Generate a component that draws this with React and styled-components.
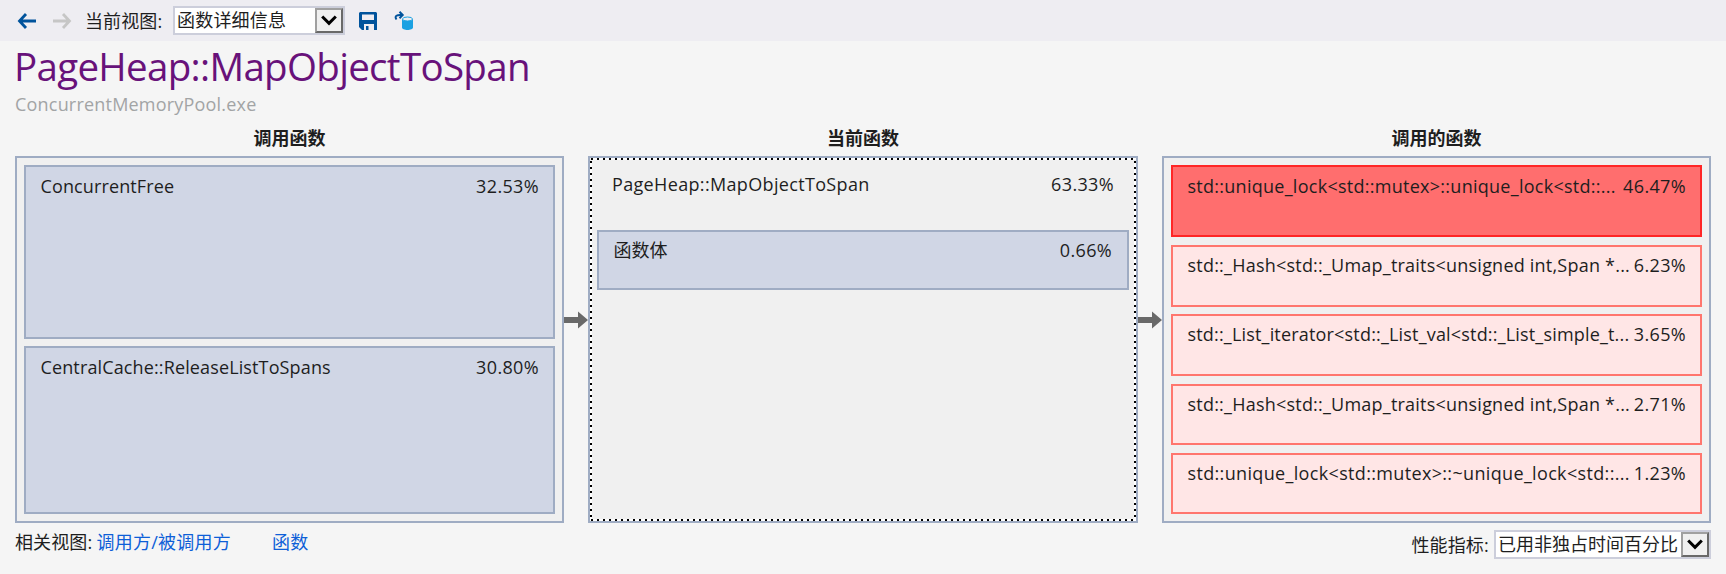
import React from "react";
import styled, { createGlobalStyle, css } from "styled-components";

const Global = createGlobalStyle`
  * { box-sizing: border-box; }
  body { margin: 0; background: #f5f5f5; }
`;

const Page = styled.div`
  width: 1726px;
  height: 574px;
  display: flex;
  flex-direction: column;
  background: #f5f5f5;
  color: #1e1e1e;
  font: 18px/24px "Open Sans", "Noto Sans CJK SC", sans-serif;
  white-space: pre;
  overflow: hidden;
`;

const Toolbar = styled.div`
  height: 41px;
  flex: none;
  display: flex;
  align-items: center;
  padding-left: 17px;
  background: #eeedf2;
`;

const Icon = styled.svg`
  flex: none;
  display: block;
  margin-left: ${(p) => p.$gap || 0}px;
`;

const Label = styled.span`
  margin: 0 0 0 ${(p) => p.$before || 0}px;
  width: ${(p) => p.$width}px;
  letter-spacing: 0.1px;
`;

const Combo = styled.div`
  width: ${(p) => p.$width}px;
  height: 29px;
  display: flex;
  border: 2px solid #cccedb;
  background: #fff;
`;

const ComboText = styled.span`
  flex: 1;
  padding-left: 2px;
  line-height: 25px;
  letter-spacing: ${(p) => p.$track || 0}px;
`;

const ComboButton = styled.span`
  width: 28px;
  flex: none;
  display: flex;
  align-items: center;
  justify-content: center;
  background: #f0f0f0;
  border: 2px solid;
  border-color: #a0a0a0 #696969 #696969 #a0a0a0;
`;

const Title = styled.h1`
  margin: 0;
  padding-left: 14px;
  height: 51px;
  flex: none;
  font-size: 38.5px;
  line-height: 50px;
  font-weight: 400;
  letter-spacing: -0.68px;
  color: #68127a;
`;

const Module = styled.div`
  padding-left: 15px;
  height: 24px;
  flex: none;
  letter-spacing: 0.2px;
  color: #a2a4a5;
`;

const Headings = styled.div`
  display: flex;
  justify-content: space-between;
  flex: none;
  height: 40px;
  padding: 10px 15px 0;
`;

const Heading = styled.h2`
  margin: 0;
  width: 549px;
  font-size: 18px;
  line-height: 24px;
  font-weight: 700;
  text-align: center;
`;

const Columns = styled.div`
  display: flex;
  flex: none;
  height: 367px;
  padding: 0 15px;
`;

const Panel = styled.div`
  width: ${(p) => p.$width || 549}px;
  display: flex;
  flex-direction: column;
  padding: 7px;
  border: 2px solid #9facc3;
  background: #f0f0f0;
`;

const FocusPanel = styled(Panel)`
  padding: 0;
`;

const dots = (dir) => `repeating-linear-gradient(${dir}, #000 0 2px, #fff 2px 6px)`;

const FocusFrame = styled.div`
  flex: 1;
  padding: 0 5px;
  border: 2px solid transparent;
  background:
    ${dots("to right")} 1px 0 / 100% 2px no-repeat border-box,
    ${dots("to right")} 1px 100% / 100% 2px no-repeat border-box,
    ${dots("to bottom")} 0 3px / 2px 100% no-repeat border-box,
    ${dots("to bottom")} 100% 3px / 2px 100% no-repeat border-box;
`;

const tones = {
  blue: css`background: #d0d6e5; border-color: #9facc3;`,
  hot: css`background: #ff6e6e; border-color: #ff2626;`,
  pink: css`background: #ffe6e6; border-color: #ff766e;`,
};

const Block = styled.div`
  height: ${(p) => p.$height}px;
  margin-bottom: ${(p) => p.$gap || 0}px;
  padding: ${(p) => p.$top || 6}px ${(p) => p.$right || 14}px 0 14.5px;
  flex: none;
  display: flex;
  justify-content: space-between;
  border: 2px solid;
  ${(p) => tones[p.$tone]}
`;

const Current = styled.div`
  height: 70px;
  display: flex;
  justify-content: space-between;
  padding: 12px 15px 0;
`;

const Name = styled.span`
  letter-spacing: ${(p) => p.$track || 0}px;
`;

const Percent = styled.span`
  letter-spacing: 0.35px;
`;

const Connector = styled.div`
  width: 24px;
  padding-top: 155px;
`;

const Footer = styled.div`
  display: flex;
  align-items: flex-start;
  padding: 7px 15px 0;
`;

const Link = styled.a`
  color: #0e5fd8;
  letter-spacing: 0.25px;
  margin-right: ${(p) => p.$after || 0}px;
`;

const Metric = styled.div`
  margin-left: auto;
  display: flex;
  align-items: center;
`;

const callers = [
  { name: "ConcurrentFree", value: "32.53%", height: 174, gap: 7, track: 0.12 },
  { name: "CentralCache::ReleaseListToSpans", value: "30.80%", height: 168, track: 0.13 },
];

const callees = [
  { name: "std::unique_lock<std::mutex>::unique_lock<std::...", value: "46.47%", height: 72, gap: 8, tone: "hot", track: 0.27 },
  { name: "std::_Hash<std::_Umap_traits<unsigned int,Span *...", value: "6.23%", height: 62, gap: 7, track: 0.22 },
  { name: "std::_List_iterator<std::_List_val<std::_List_simple_t...", value: "3.65%", height: 62, gap: 8, track: 0.18 },
  { name: "std::_Hash<std::_Umap_traits<unsigned int,Span *...", value: "2.71%", height: 61, gap: 8, track: 0.22 },
  { name: "std::unique_lock<std::mutex>::~unique_lock<std::...", value: "1.23%", height: 61, track: 0.34 },
];

const Chevron = () => (
  <svg width="16" height="12" viewBox="0 0 16 12">
    <path d="M1.2 1.5 8 8.3 14.8 1.5" fill="none" stroke="#000" strokeWidth="3" />
  </svg>
);

const Arrow = () => (
  <Connector>
    <svg width="24" height="18" viewBox="0 0 24 18" display="block">
      <path d="M0 6h14V0.5l10 8.5-10 8.5V12H0z" fill="#696969" />
    </svg>
  </Connector>
);

export default function App() {
  return (
    <Page>
      <Global />
      <Toolbar>
        <Icon width="20" height="18" viewBox="0 0 20 18">
          <path d="M19 9H3M9 2 2.5 9 9 16" fill="none" stroke="#00539c" strokeWidth="2.8" />
        </Icon>
        <Icon $gap={15} width="20" height="18" viewBox="0 0 20 18">
          <path d="M1 9h16M11 2l6.5 7-6.5 7" fill="none" stroke="#c6c6c6" strokeWidth="2.8" />
        </Icon>
        <Label $before={13} $width={88}>当前视图:</Label>
        <Combo $width={172}>
          <ComboText $track={0.2}>函数详细信息</ComboText>
          <ComboButton><Chevron /></ComboButton>
        </Combo>
        <Icon $gap={13} width="20" height="20" viewBox="0 0 20 20">
          <path
            fillRule="evenodd"
            d="M1 2l1-1h16l1 1v17h-3v-6H6v6H4l-3-3zM4 3.5V9h12V3.5z"
            fill="#00539c"
          />
          <path d="M8 15h2.5v4H8z" fill="#00539c" />
        </Icon>
        <Icon $gap={16} width="20" height="20" viewBox="0 0 20 20">
          <path d="M2.5 8.5C0 5 3 3.5 8 4M5.5 0.8 8.7 4 5.5 7.2" fill="none" stroke="#00539c" strokeWidth="2" />
          <path d="M8 8v8.5c0 3.3 11 3.3 11 0V8z" fill="#1ba1e2" />
          <ellipse cx="13.5" cy="8" rx="5" ry="2" fill="#eeedf2" stroke="#1ba1e2" />
        </Icon>
      </Toolbar>
      <Title>PageHeap::MapObjectToSpan</Title>
      <Module>ConcurrentMemoryPool.exe</Module>
      <Headings>
        <Heading>调用函数</Heading>
        <Heading>当前函数</Heading>
        <Heading>调用的函数</Heading>
      </Headings>
      <Columns>
        <Panel>
          {callers.map((c) => (
            <Block key={c.name} $tone="blue" $height={c.height} $gap={c.gap} $top={7}>
              <Name $track={c.track}>{c.name}</Name>
              <Percent>{c.value}</Percent>
            </Block>
          ))}
        </Panel>
        <Arrow />
        <FocusPanel $width={550}>
          <FocusFrame>
            <Current>
              <Name $track={0.34}>PageHeap::MapObjectToSpan</Name>
              <Percent>63.33%</Percent>
            </Current>
            <Block $tone="blue" $height={60} $right={15}>
              <Name>函数体</Name>
              <Percent>0.66%</Percent>
            </Block>
          </FocusFrame>
        </FocusPanel>
        <Arrow />
        <Panel>
          {callees.map((c) => (
            <Block key={c.value} $tone={c.tone || "pink"} $height={c.height} $gap={c.gap} $top={c.tone ? 7 : 6}>
              <Name $track={c.track}>{c.name}</Name>
              <Percent>{c.value}</Percent>
            </Block>
          ))}
        </Panel>
      </Columns>
      <Footer>
        <Label $width={81.5}>相关视图:</Label>
        <Link $after={41}>调用方/被调用方</Link>
        <Link>函数</Link>
        <Metric>
          <Label $width={82.5}>性能指标:</Label>
          <Combo $width={217}>
            <ComboText>已用非独占时间百分比</ComboText>
            <ComboButton><Chevron /></ComboButton>
          </Combo>
        </Metric>
      </Footer>
    </Page>
  );
}
